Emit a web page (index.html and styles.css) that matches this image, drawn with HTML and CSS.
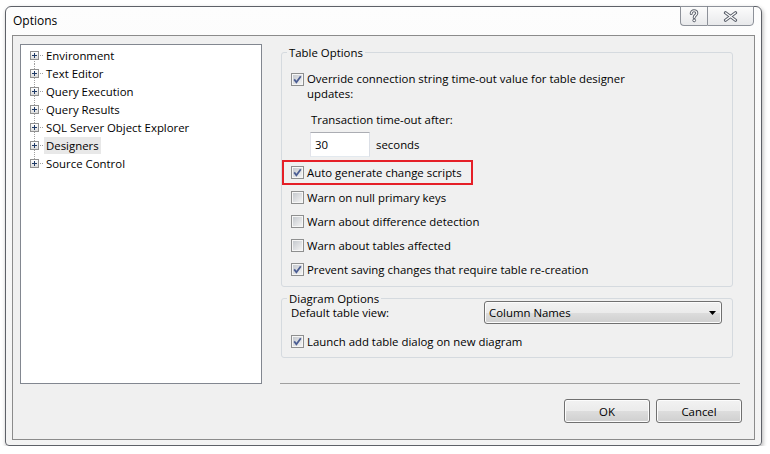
FILE: index.html
```html
<!DOCTYPE html>
<html lang="en">
<head>
    <meta charset="UTF-8">
    <title>Options</title>
    <link rel="stylesheet" href="styles.css">
</head>
<body>

<div class="window">
    <div class="titlebar">
        <span class="title">Options</span>
        <div class="caption">
            <button class="cap cap-help" title="Help">
                <svg width="12" height="14" viewBox="0 0 12 14">
                    <path d="M3.2 4.6C3.2 2.8 4.4 1.8 6 1.8C7.7 1.8 8.8 2.8 8.8 4.2C8.8 6.1 6.2 6.4 6.2 8.4" fill="none" stroke="#5b606b" stroke-width="3" stroke-linecap="round"/>
                    <path d="M3.2 4.6C3.2 2.8 4.4 1.8 6 1.8C7.7 1.8 8.8 2.8 8.8 4.2C8.8 6.1 6.2 6.4 6.2 8.4" fill="none" stroke="#fff" stroke-width="1.1" stroke-linecap="round"/>
                    <circle cx="6.2" cy="11.4" r="1.4" fill="#fff" stroke="#5b606b" stroke-width="1"/>
                </svg>
            </button>
            <button class="cap cap-close" title="Close">
                <svg width="15" height="11" viewBox="0 0 15 11">
                    <path d="M2.5 1.8L12.5 9.2M12.5 1.8L2.5 9.2" fill="none" stroke="#5b606b" stroke-width="3.2" stroke-linecap="round"/>
                    <path d="M2.5 1.8L12.5 9.2M12.5 1.8L2.5 9.2" fill="none" stroke="#fff" stroke-width="1.2" stroke-linecap="round"/>
                </svg>
            </button>
        </div>
    </div>

    <div class="client">
        <ul class="tree">
            <li><span class="expander"><svg width="7" height="7"><path d="M1 3.5h5M3.5 1v5" stroke="#1f3a66"/></svg></span><span class="node">Environment</span></li>
            <li><span class="expander"><svg width="7" height="7"><path d="M1 3.5h5M3.5 1v5" stroke="#1f3a66"/></svg></span><span class="node">Text Editor</span></li>
            <li><span class="expander"><svg width="7" height="7"><path d="M1 3.5h5M3.5 1v5" stroke="#1f3a66"/></svg></span><span class="node">Query Execution</span></li>
            <li><span class="expander"><svg width="7" height="7"><path d="M1 3.5h5M3.5 1v5" stroke="#1f3a66"/></svg></span><span class="node">Query Results</span></li>
            <li><span class="expander"><svg width="7" height="7"><path d="M1 3.5h5M3.5 1v5" stroke="#1f3a66"/></svg></span><span class="node">SQL Server Object Explorer</span></li>
            <li><span class="expander"><svg width="7" height="7"><path d="M1 3.5h5M3.5 1v5" stroke="#1f3a66"/></svg></span><span class="node hot">Designers</span></li>
            <li><span class="expander"><svg width="7" height="7"><path d="M1 3.5h5M3.5 1v5" stroke="#1f3a66"/></svg></span><span class="node">Source Control</span></li>
        </ul>

        <div class="pane">
            <fieldset class="group group-table">
                <legend>Table Options</legend>

                <div class="check check-multi">
                    <span class="cb"><svg width="13" height="13"><path d="M3.2 6.4l2.2 2.8L9.8 3.2" fill="none" stroke="#4b5d93" stroke-width="1.8"/></svg></span>
                    <span class="check-label">Override connection string time-out value for table designer updates:</span>
                </div>

                <div class="timeout-label">Transaction time-out after:</div>
                <div class="timeout-row">
                    <input type="text" class="textbox" value="30">
                    <span class="unit">seconds</span>
                </div>

                <div class="check callout">
                    <span class="cb"><svg width="13" height="13"><path d="M3.2 6.4l2.2 2.8L9.8 3.2" fill="none" stroke="#4b5d93" stroke-width="1.8"/></svg></span>
                    <span class="check-label">Auto generate change scripts</span>
                </div>

                <div class="check">
                    <span class="cb"></span>
                    <span class="check-label">Warn on null primary keys</span>
                </div>
                <div class="check">
                    <span class="cb"></span>
                    <span class="check-label">Warn about difference detection</span>
                </div>
                <div class="check">
                    <span class="cb"></span>
                    <span class="check-label">Warn about tables affected</span>
                </div>
                <div class="check">
                    <span class="cb"><svg width="13" height="13"><path d="M3.2 6.4l2.2 2.8L9.8 3.2" fill="none" stroke="#4b5d93" stroke-width="1.8"/></svg></span>
                    <span class="check-label">Prevent saving changes that require table re-creation</span>
                </div>
            </fieldset>

            <fieldset class="group group-diagram">
                <legend>Diagram Options</legend>

                <div class="view-row">
                    <span>Default table view:</span>
                    <div class="combo">
                        <span>Column Names</span>
                        <svg width="7" height="4"><path d="M0 0h7L3.5 4z" fill="#000"/></svg>
                    </div>
                </div>

                <div class="check check-launch">
                    <span class="cb"><svg width="13" height="13"><path d="M3.2 6.4l2.2 2.8L9.8 3.2" fill="none" stroke="#4b5d93" stroke-width="1.8"/></svg></span>
                    <span class="check-label">Launch add table dialog on new diagram</span>
                </div>
            </fieldset>

            <div class="separator"></div>

            <div class="dialog-buttons">
                <button class="btn">OK</button>
                <button class="btn">Cancel</button>
            </div>
        </div>
    </div>
</div>

</body>
</html>
```

FILE: styles.css
```css
body {
    margin: 0;
    padding: 6px 0 0 5px;
    background: #fff;
    font-family: "Open Sans", "Noto Sans", sans-serif;
    font-size: 11.4px;
    color: #000;
}

.window {
    box-sizing: border-box;
    width: 757px;
    height: 440px;
    border: 1px solid #5e6168;
    border-radius: 6px 6px 4px 4px;
    background: linear-gradient(#fdfdfd, #f3f3f3);
    box-shadow: 1px 2px 4px rgba(0, 0, 0, 0.3);
    padding: 0 6px 5px 6px;
    display: flex;
    flex-direction: column;
}

/* title bar */
.titlebar {
    height: 28px;
    display: flex;
    justify-content: space-between;
    align-items: flex-start;
}

.title {
    padding: 6px 0 0 1px;
    font-size: 12px;
    line-height: 15px;
}

.caption {
    display: flex;
    margin: -1px 1px 0 0;
}

.cap {
    height: 20px;
    padding: 0;
    border: 1px solid #8d9199;
    background: linear-gradient(#fcfcfc, #e8e9eb);
    display: flex;
    align-items: center;
    justify-content: center;
}

.cap-help {
    width: 27px;
    border-right: none;
    border-radius: 0 0 0 4px;
}

.cap-close {
    width: 47px;
    border-radius: 0 0 4px 0;
}

/* client area */
.client {
    flex: 1;
    display: flex;
    align-items: flex-start;
    border: 1px solid #8b8b8b;
    background: #f0f0f0;
    padding: 0 0 0 7px;
}

.tree {
    box-sizing: border-box;
    width: 242px;
    height: 340px;
    margin: 8px 0 0 0;
    padding: 1px 0 0 9px;
    list-style: none;
    background: #fff;
    border: 1px solid #828790;
}

.tree li {
    position: relative;
    height: 18px;
    display: flex;
    align-items: center;
}

.tree li::before {
    content: "";
    position: absolute;
    left: 4px;
    top: 0;
    bottom: 0;
    width: 1px;
    background: repeating-linear-gradient(#a0a0a0 0 1px, transparent 1px 2px);
}

.tree li:first-child::before {
    top: 50%;
}

.tree li:last-child::before {
    bottom: 50%;
}

.expander {
    position: relative;
    z-index: 1;
    box-sizing: border-box;
    width: 9px;
    height: 9px;
    border: 1px solid #919191;
    background: linear-gradient(#fff, #dcdcdc);
    margin-right: 5px;
}

.expander svg {
    display: block;
}

.expander::after {
    content: "";
    position: absolute;
    left: 8px;
    top: 3px;
    width: 5px;
    height: 1px;
    background: repeating-linear-gradient(to right, transparent 0 1px, #a0a0a0 1px 2px);
}

.node {
    padding: 0 2px;
    height: 17px;
    line-height: 17px;
    white-space: nowrap;
}

.node.hot {
    background: #e8e8e8;
}

/* right pane */
.pane {
    width: 462px;
    margin-left: 18px;
    padding-top: 9px;
    display: flex;
    flex-direction: column;
}

.group {
    margin: 0 9px 0 1px;
    border: 1px solid #d5dadf;
    border-radius: 3px;
    padding: 0 10px 0 9px;
    min-width: 0;
}

.group legend {
    padding: 0 2px;
    margin-left: -4px;
    line-height: 15px;
}

.group-table {
    padding-top: 11px;
    padding-bottom: 5px;
}

.group-diagram {
    margin-top: 4px;
    padding-bottom: 4px;
}

.check {
    display: flex;
    align-items: center;
    height: 24px;
}

.check-label {
    line-height: 15px;
}

.cb {
    box-sizing: border-box;
    flex: none;
    width: 13px;
    height: 13px;
    padding: 1px;
    margin-right: 3px;
    border: 1px solid #8e8f8f;
    background: linear-gradient(135deg, #c5c9ce, #f3f3f3) content-box, #f6f6f6;
}

.cb svg {
    display: block;
    margin: -2px;
}

.check-multi {
    height: auto;
    align-items: flex-start;
}

.check-multi .cb {
    margin-top: 2px;
}

.check-multi .check-label {
    max-width: 340px;
}

.timeout-label {
    margin: 11px 0 0 20px;
    line-height: 15px;
}

.timeout-row {
    display: flex;
    align-items: center;
    margin: 5px 0 0 19px;
}

.textbox {
    box-sizing: border-box;
    width: 60px;
    height: 25px;
    padding: 0 4px;
    border: 1px solid;
    border-color: #abadb3 #dbdfe6 #e3e9ef #e2e3ea;
    font: inherit;
    color: #000;
}

.unit {
    margin-left: 6px;
}

.callout {
    box-sizing: border-box;
    width: fit-content;
    height: 25px;
    margin: 3px 0 0 -9px;
    padding: 0 9px 0 7px;
    border: 2px solid #e51f27;
}

.view-row {
    display: flex;
    align-items: center;
    height: 23px;
    margin-top: -5px;
}

.combo {
    box-sizing: border-box;
    width: 238px;
    height: 23px;
    margin-left: auto;
    padding: 0 5px 0 4px;
    display: flex;
    align-items: center;
    justify-content: space-between;
    border: 1px solid #707070;
    border-radius: 3px;
    background: linear-gradient(#f2f2f2 0%, #ebebeb 50%, #dddddd 50%, #cfcfcf 100%);
    box-shadow: inset 0 0 0 1px #fcfcfc;
}

.check-launch {
    margin-top: 5px;
}

.separator {
    height: 1px;
    margin: 25px 2px 0 0;
    background: #a0a0a0;
}

.dialog-buttons {
    display: flex;
    justify-content: flex-end;
    gap: 6px;
    margin-top: 15px;
}

.btn {
    width: 86px;
    height: 24px;
    padding: 0;
    border: 1px solid #707070;
    border-radius: 3px;
    background: linear-gradient(#f2f2f2 0%, #ebebeb 50%, #dddddd 50%, #cfcfcf 100%);
    box-shadow: inset 0 0 0 1px #fcfcfc;
    font: inherit;
    color: #000;
}
```
